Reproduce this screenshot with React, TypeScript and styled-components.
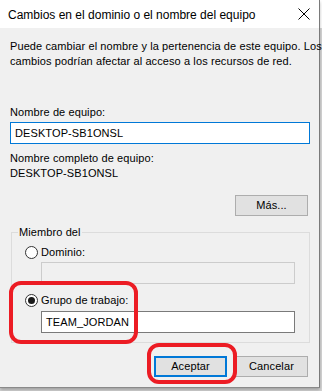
import React from "react";
import styled, { createGlobalStyle } from "styled-components";

const Global = createGlobalStyle`
  html, body { margin: 0; padding: 0; }
  body {
    width: 322px;
    height: 391px;
    overflow: hidden;
    background: #e8e8e8;
    font-family: "Liberation Sans", Arial, sans-serif;
  }
`;

const Page = styled.div`
  position: relative;
  width: 322px;
  height: 391px;
  display: flex;
  align-items: flex-start;
  background: linear-gradient(#ffffff 0 28px, #d6d6d6 28px);
`;

const Window = styled.div`
  width: 319px;
  height: 387px;
  border-right: 1px solid #7a7a7a;
  border-bottom: 1px solid #8a8a8a;
  background: #f0f0f0;
  display: flex;
  flex-direction: column;
  box-shadow: 0 2px 3px rgba(0, 0, 0, 0.25);
`;

const TitleBar = styled.div`
  height: 28px;
  flex: none;
  background: #ffffff;
  display: flex;
  align-items: center;
  justify-content: space-between;
  padding: 0 9px 0 8px;
  font-family: "Liberation Sans", Arial, sans-serif;
  font-size: 12px;
  color: #000;
`;

const Title = styled.span`
  letter-spacing: 0px;
  padding-top: 1px;
`;

const Close = styled.svg`
  width: 12px;
  height: 12px;
  display: block;
`;

const Body = styled.div`
  display: flex;
  flex-direction: column;
  padding: 11px 9px 0 10px;
  font-size: 11px;
  line-height: 15px;
  letter-spacing: 0.1px;
  color: #000;
`;

const Text = styled.div<{ $mt?: number }>`
  margin-top: ${(p) => p.$mt ?? 0}px;
  white-space: nowrap;
`;

const Input = styled.div<{ $variant?: "focus" | "disabled" | "normal"; $mt?: number; $ml?: number }>`
  box-sizing: border-box;
  height: 22px;
  margin-top: ${(p) => p.$mt ?? 0}px;
  margin-left: ${(p) => p.$ml ?? 0}px;
  padding: 0 4px;
  display: flex;
  align-items: center;
  font-size: 11px;
  background: ${(p) => (p.$variant === "disabled" ? "#f0f0f0" : "#ffffff")};
  border: 1px solid
    ${(p) => (p.$variant === "focus" ? "#0078d7" : p.$variant === "disabled" ? "#cccccc" : "#7a7a7a")};
`;

const ButtonRow = styled.div<{ $mt: number }>`
  display: flex;
  justify-content: flex-end;
  gap: 8px;
  margin-top: ${(p) => p.$mt}px;
  padding-right: 2px;
`;

const Button = styled.div<{ $default?: boolean }>`
  box-sizing: border-box;
  width: 73px;
  height: 21px;
  display: flex;
  align-items: center;
  justify-content: center;
  font-size: 11px;
  background: #e1e1e1;
  border: 1px solid ${(p) => (p.$default ? "#0078d7" : "#adadad")};
  box-shadow: ${(p) => (p.$default ? "inset 0 0 0 1px #0078d7" : "none")};
`;

const Group = styled.fieldset`
  margin: 9px 0 0 1px;
  padding: 0 14px 9px 13px;
  border: 1px solid #dcdcdc;
  display: flex;
  flex-direction: column;
  min-width: 0;
`;

const Legend = styled.legend`
  padding: 0 1px;
  margin-left: -7px;
  font-size: 11px;
  line-height: 15px;
`;

const RadioRow = styled.label<{ $mt: number }>`
  display: flex;
  align-items: center;
  gap: 3px;
  margin-top: ${(p) => p.$mt}px;
  height: 15px;
`;

const Radio = styled.span<{ $checked?: boolean }>`
  box-sizing: border-box;
  width: 13px;
  height: 13px;
  border-radius: 50%;
  border: 1px solid #333333;
  background: #ffffff;
  display: flex;
  align-items: center;
  justify-content: center;
  &::after {
    content: "";
    width: 7px;
    height: 7px;
    border-radius: 50%;
    background: ${(p) => (p.$checked ? "#1a1a1a" : "transparent")};
  }
`;

const Mark = styled.div<{ $x: number; $y: number; $w: number; $h: number; $r: number }>`
  position: absolute;
  left: ${(p) => p.$x}px;
  top: ${(p) => p.$y}px;
  width: ${(p) => p.$w}px;
  height: ${(p) => p.$h}px;
  box-sizing: border-box;
  border: 4px solid #ec1c24;
  border-radius: ${(p) => p.$r}px;
  pointer-events: none;
`;

export default function App() {
  return (
    <Page>
      <Global />
      <Window>
        <TitleBar>
          <Title>Cambios en el dominio o el nombre del equipo</Title>
          <Close viewBox="0 0 12 12">
            <path d="M0.5 0.5 L11.5 11.5 M11.5 0.5 L0.5 11.5" stroke="#000" strokeWidth="1" />
          </Close>
        </TitleBar>
        <Body>
          <Text>Puede cambiar el nombre y la pertenencia de este equipo. Los</Text>
          <Text>cambios podrían afectar al acceso a los recursos de red.</Text>
          <Text $mt={36}>Nombre de equipo:</Text>
          <Input $variant="focus" $mt={2}>DESKTOP-SB1ONSL</Input>
          <Text $mt={7}>Nombre completo de equipo:</Text>
          <Text>DESKTOP-SB1ONSL</Text>
          <ButtonRow $mt={14}>
            <Button>Más...</Button>
          </ButtonRow>
          <Group>
            <Legend>Miembro del</Legend>
            <RadioRow $mt={5}>
              <Radio />
              Dominio:
            </RadioRow>
            <Input $variant="disabled" $mt={2} $ml={16} />
            <RadioRow $mt={9}>
              <Radio $checked />
              Grupo de trabajo:
            </RadioRow>
            <Input $variant="normal" $mt={3} $ml={16}>TEAM_JORDAN</Input>
          </Group>
          <ButtonRow $mt={13}>
            <Button $default>Aceptar</Button>
            <Button>Cancelar</Button>
          </ButtonRow>
        </Body>
      </Window>
      <Mark $x={9} $y={281} $w={129} $h={63} $r={12} />
      <Mark $x={147} $y={343} $w={90} $h={41} $r={12} />
    </Page>
  );
}
